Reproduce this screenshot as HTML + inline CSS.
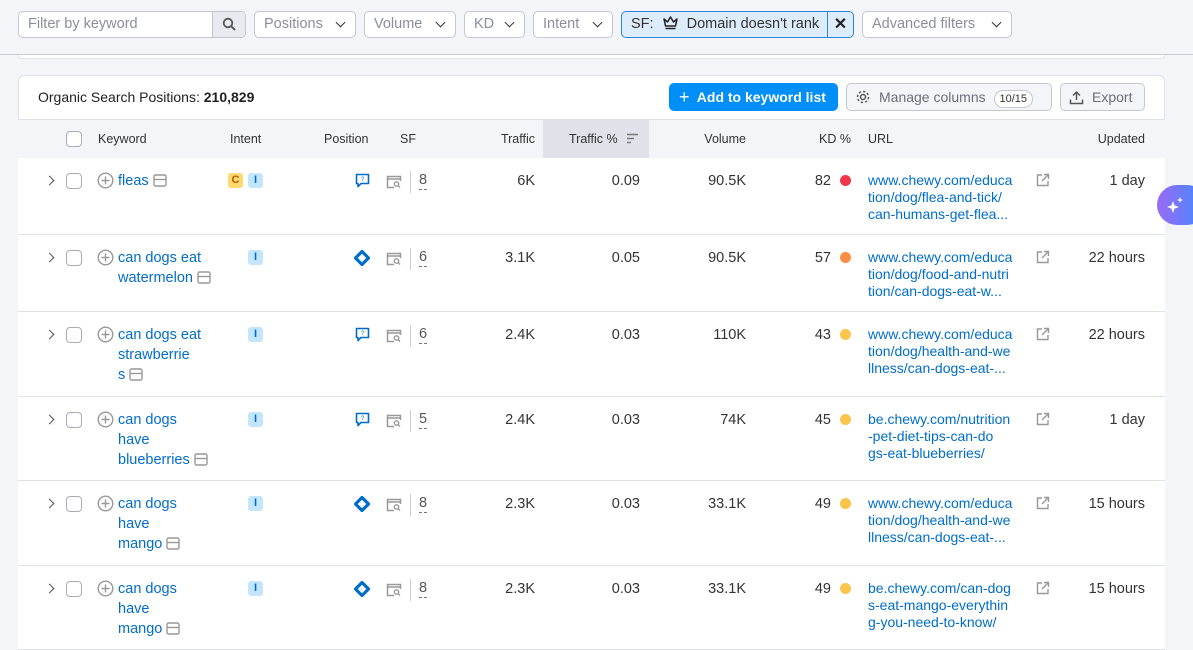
<!DOCTYPE html>
<html style="width:1193px;height:650px;overflow:hidden"><head><style>
*{box-sizing:border-box;margin:0;padding:0}
body{width:1193px;height:650px;overflow:hidden;background:#f4f5f9;font-family:"Liberation Sans",Arial,sans-serif;color:#333;position:relative;font-size:14px}
.a{position:absolute}
.flt{position:absolute;top:11px;height:27px;border:1px solid #c4c7cf;border-radius:5px;background:#fff;color:#8a8e9b;font-size:14.5px;line-height:25px;padding-left:9px}
.chev{position:absolute;right:11px;top:7px;width:7px;height:7px;border-right:1.8px solid #333;border-bottom:1.8px solid #333;transform:rotate(45deg)}
.card{position:absolute;left:18px;top:75px;width:1147px;height:575px;background:#fff;border:1px solid #e0e1e9;border-bottom:none;border-radius:6px 6px 0 0}
.hdr{position:absolute;left:18px;top:119px;width:1147px;height:40px;background:#f4f5f9;border-top:1px solid #e0e1e9;border-bottom:1px solid #e0e1e9;font-size:12.5px;color:#333}
.hdr span{position:absolute;top:12px}
.row{position:absolute;left:18px;width:1147px;border-bottom:1px solid #e0e1e9;background:#fff}
.row .t{position:absolute;top:13px;font-size:14.5px;line-height:20px}
.cb{position:absolute;width:16px;height:16px;border:1px solid #a9acb8;border-radius:4px;background:#fff}
.kw{color:#006dca;width:115px}
.url{color:#006dca;width:172px;line-height:17px!important;font-size:14px!important;word-break:break-all}
.r{text-align:right}
.badge{position:absolute;top:15px;width:15px;height:15px;border-radius:3px;font-size:11px;font-weight:bold;text-align:center;line-height:15px}
.bi{background:#c4e5fe;color:#006dca}
.bc{background:#ffd870;color:#b25b00}
.dot{position:absolute;width:11px;height:11px;border-radius:50%;top:17px;left:822px}
</style></head><body>
<div class="flt" style="left:18px;width:228px;padding-left:9px">Filter by keyword<div class="a" style="right:0;top:0;width:33px;height:25px;background:#e9eaef;border-left:1px solid #c4c7cf;border-radius:0 4px 4px 0"><svg class="a" style="left:9px;top:5px" width="15" height="15" viewBox="0 0 15 15"><circle cx="6" cy="6" r="4.3" fill="none" stroke="#555" stroke-width="1.8"/><path d="M9.3 9.3L13 13" stroke="#555" stroke-width="1.9"/></svg></div></div>
<div class="flt" style="left:254px;width:102px">Positions<div class="chev"></div></div>
<div class="flt" style="left:364px;width:92px">Volume<div class="chev"></div></div>
<div class="flt" style="left:464px;width:61px">KD<div class="chev"></div></div>
<div class="flt" style="left:533px;width:80px">Intent<div class="chev"></div></div>
<div class="flt" style="left:621px;width:233px;background:#dcecfa;border-color:#2a86d8;color:#333">SF: <svg style="vertical-align:-2px;margin:0 4px" width="17" height="15" viewBox="0 0 17 15"><path d="M2 4l3.5 3L8.5 2l3 5L15 4l-1.5 7h-10z" fill="none" stroke="#222" stroke-width="1.5" stroke-linejoin="round"/><path d="M3.5 13.5h10" stroke="#222" stroke-width="1.5"/></svg> Domain doesn't rank<div class="a" style="right:0;top:0;width:26px;height:25px;border-left:1px solid #2a86d8;text-align:center;font-weight:bold;color:#222;font-size:16px">✕</div></div>
<div class="flt" style="left:862px;width:150px">Advanced filters<div class="chev"></div></div>
<div class="a" style="left:0;top:54px;width:1193px;height:1px;background:#c8cad2"></div>
<div class="a" style="left:18px;top:55px;width:1147px;height:4px;background:#fff;border:1px solid #e0e1e9;border-top:none;border-radius:0 0 6px 6px"></div>
<div class="card"></div>
<div class="a" style="left:38px;top:89px;font-size:14px;color:#222">Organic Search Positions: <b>210,829</b></div>
<div class="a" style="left:669px;top:83px;width:169px;height:28px;background:#008ff8;border-radius:5px;color:#fff;font-weight:bold;font-size:14px;line-height:28px;padding-left:10px"><span style="font-size:18px;font-weight:normal;vertical-align:-1px">+</span>&nbsp; Add to keyword list</div>
<div class="a" style="left:846px;top:83px;width:206px;height:28px;background:#f4f5f9;border:1px solid #c4c7cf;border-radius:5px;color:#6c6e79;font-size:14px;line-height:26px;padding-left:32px">Manage columns <span style="display:inline-block;border:1px solid #c4c7cf;border-radius:10px;background:#fff;font-size:11px;line-height:16px;padding:0 5px;margin-left:4px;color:#333">10/15</span>
<svg class="a" style="left:8px;top:5px" width="16" height="16" viewBox="0 0 16 16"><circle cx="8" cy="8" r="2.5" fill="none" stroke="#555" stroke-width="1.5"/><circle cx="8" cy="8" r="5.5" fill="none" stroke="#555" stroke-width="1.5" stroke-dasharray="2.2 2.1"/></svg></div>
<div class="a" style="left:1060px;top:83px;width:85px;height:28px;background:#f4f5f9;border:1px solid #c4c7cf;border-radius:5px;color:#6c6e79;font-size:14px;line-height:26px;padding-left:31px">Export<svg class="a" style="left:8px;top:6px" width="15" height="15" viewBox="0 0 15 15"><path d="M7.5 10V2M4 5.5l3.5-3.5 3.5 3.5M1.5 9.5v4h12v-4" fill="none" stroke="#555" stroke-width="1.5"/></svg></div>
<div class="hdr">
<div class="cb" style="left:48px;top:11px"></div>
<span style="left:80px">Keyword</span><span style="left:212px">Intent</span><span style="left:306px">Position</span><span style="left:382px">SF</span>
<span style="right:630px">Traffic</span>
<div class="a" style="left:525px;top:0;width:106px;height:38px;background:#e0e1e9"></div>
<span style="left:551px">Traffic %</span>
<svg class="a" style="left:608px;top:13px" width="13" height="11" viewBox="0 0 13 11"><path d="M1 1.5h11M1 5.5h7M1 9.5h4" stroke="#777" stroke-width="1.5"/></svg>
<span style="right:419px">Volume</span><span style="right:314px">KD %</span><span style="left:850px">URL</span><span style="right:20px">Updated</span>
</div>
<div id="rows"></div>
<script>
var R=[
[158,77,["fleas"],"CI","q","8","6K","0.09","90.5K","82","#f0384a",["www.chewy.com/educa","tion/dog/flea-and-tick/","can-humans-get-flea..."],"1 day"],
[235,77,["can dogs eat","watermelon"],"I","d","6","3.1K","0.05","90.5K","57","#ff8c43",["www.chewy.com/educa","tion/dog/food-and-nutri","tion/can-dogs-eat-w..."],"22 hours"],
[312,85,["can dogs eat","strawberrie","s"],"I","q","6","2.4K","0.03","110K","43","#fcc44a",["www.chewy.com/educa","tion/dog/health-and-we","llness/can-dogs-eat-..."],"22 hours"],
[397,84,["can dogs","have","blueberries"],"I","q","5","2.4K","0.03","74K","45","#fcc44a",["be.chewy.com/nutrition","-pet-diet-tips-can-do","gs-eat-blueberries/"],"1 day"],
[481,85,["can dogs","have","mango"],"I","d","8","2.3K","0.03","33.1K","49","#fcc44a",["www.chewy.com/educa","tion/dog/health-and-we","llness/can-dogs-eat-..."],"15 hours"],
[566,84,["can dogs","have","mango"],"I","d","8","2.3K","0.03","33.1K","49","#fcc44a",["be.chewy.com/can-dog","s-eat-mango-everythin","g-you-need-to-know/"],"15 hours"]];
var h="";
var qi='<svg class="a" style="left:337px;top:15px" width="15" height="15" viewBox="0 0 15 15"><path d="M1.5 1.5h12v9H6l-3 3v-3H1.5z" fill="none" stroke="#006dca" stroke-width="1.6" stroke-linejoin="round"/><text x="7.5" y="8" font-size="6" text-anchor="middle" fill="#006dca" font-family="Liberation Sans">?</text></svg>';
var di='<svg class="a" style="left:336px;top:15px" width="16" height="16" viewBox="0 0 16 16"><path d="M8 1.5L14.5 8 8 14.5 1.5 8z" fill="none" stroke="#006dca" stroke-width="3.2" stroke-linejoin="round"/></svg>';
var sfi='<svg class="a" style="left:368px;top:17px" width="16" height="14" viewBox="0 0 16 14"><path d="M8 12.5H1.5v-11h13V6" fill="none" stroke="#999" stroke-width="1.5"/><path d="M1.5 4h13" stroke="#999" stroke-width="1.5"/><circle cx="10.5" cy="9" r="2.2" fill="none" stroke="#999" stroke-width="1.4"/><path d="M12 10.5l2 2" stroke="#999" stroke-width="1.4"/></svg>';
R.forEach(function(r){
 var k=r[2],last=k.length-1;
 var kw=k.map(function(s,i){return s+(i==last?' <svg style="vertical-align:-2px" width="14" height="13" viewBox="0 0 14 13"><rect x="1" y="1" width="12" height="11" rx="1.5" fill="none" stroke="#999" stroke-width="1.4"/><path d="M1 5.5h12" stroke="#999" stroke-width="1.4"/></svg>':'');}).join('<br>');
 h+='<div class="row" style="top:'+r[0]+'px;height:'+r[1]+'px">';
 h+='<div class="a" style="left:28px;top:19px;width:7px;height:7px;border-right:1.6px solid #555;border-top:1.6px solid #555;transform:rotate(45deg)"></div>';
 h+='<div class="cb" style="left:48px;top:15px"></div>';
 h+='<svg class="a" style="left:79px;top:14px" width="17" height="17" viewBox="0 0 17 17"><circle cx="8.5" cy="8.5" r="7.3" fill="none" stroke="#999" stroke-width="1.4"/><path d="M8.5 4.5v8M4.5 8.5h8" stroke="#999" stroke-width="1.4"/></svg>';
 h+='<div class="t kw" style="left:100px">'+kw+'</div>';
 if(r[3]=="CI"){h+='<div class="badge bc" style="left:210px">C</div><div class="badge bi" style="left:230px">I</div>';}
 else h+='<div class="badge bi" style="left:230px">I</div>';
 h+=(r[4]=="q"?qi:di)+sfi;
 h+='<div class="a" style="left:392px;top:13px;width:1px;height:22px;background:#ccc"></div>';
 h+='<div class="t" style="left:401px;color:#555;border-bottom:1px dashed #777;line-height:17px;top:14px">'+r[5]+'</div>';
 h+='<div class="t r" style="right:630px">'+r[6]+'</div>';
 h+='<div class="t r" style="right:525px">'+r[7]+'</div>';
 h+='<div class="t r" style="right:419px">'+r[8]+'</div>';
 h+='<div class="t r" style="right:334px">'+r[9]+'</div>';
 h+='<div class="dot" style="background:'+r[10]+'"></div>';
 h+='<div class="t url" style="left:850px;top:14px">'+r[11].join('<br>')+'</div>';
 h+='<svg class="a" style="left:1018px;top:15px" width="14" height="14" viewBox="0 0 14 14"><path d="M6 2H1.5v10.5H12V8M8 1.5h4.5V6M12.5 1.5L6 8" fill="none" stroke="#999" stroke-width="1.4"/></svg>';
 h+='<div class="t r" style="right:20px">'+r[12]+'</div>';
 h+='</div>';
});
document.getElementById('rows').innerHTML=h;
</script>
<div class="a" style="left:1157px;top:185px;width:50px;height:40px;border-radius:20px;background:linear-gradient(90deg,#9a6bf5,#3d8bff)"><svg class="a" style="left:8px;top:9px" width="22" height="22" viewBox="0 0 22 22"><path d="M8 7l1.6 4.4L14 13l-4.4 1.6L8 19l-1.6-4.4L2 13l4.4-1.6z M15 3l.8 2.2L18 6l-2.2.8L15 9l-.8-2.2L12 6l2.2-.8z" fill="#fff"/></svg></div>
</body></html>
